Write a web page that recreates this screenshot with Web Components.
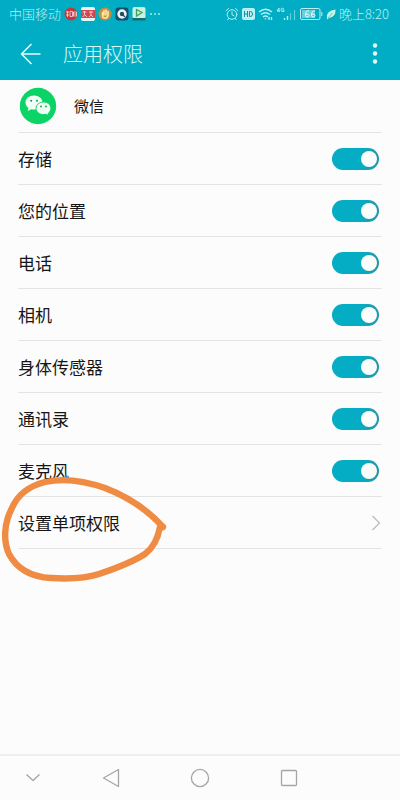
<!DOCTYPE html>
<html lang="zh-CN">
<head>
<meta charset="utf-8">
<meta name="viewport" content="width=device-width, initial-scale=1">
<title>应用权限</title>
<style>
  html { height: 100%; }
  body { margin: 0; min-height: 100%; display: flex; background: #fcfcfc; color: #161616; font-family: "Noto Sans CJK SC", "Noto Sans", sans-serif; --teal: #00adc4; --line: #e4e4e4; --pale: #b9f0f3; }
</style>
</head>
<body>
<permissions-app></permissions-app>
<script>
class BaseElement extends HTMLElement {
  constructor() {
    super();
    this.attachShadow({ mode: 'open' }).innerHTML = '<style>*{box-sizing:border-box}svg{display:block;flex:none}</style>' + this.render();
  }
  render() { return ''; }
}

customElements.define('status-bar', class extends BaseElement {
  render() {
    return `<style>
      :host { display: flex; align-items: center; justify-content: space-between; height: 28px; padding: 0 11px 0 9px; background: var(--teal); color: var(--pale); font-size: 13px; font-weight: 300; line-height: 28px; white-space: nowrap; }
      .group { display: flex; align-items: center; gap: 3px; }
    </style>
    <div class="group">
      <span>中国移动</span>
      <svg width="14" height="14" viewBox="0 0 14 14"><circle cx="7" cy="7" r="6.5" fill="#c3393f"/><path d="M2 5h3M3.5 4v6M2 8h3M6 4.500h2.500v5H6zM9.500 5h3v4h-3zM9.500 7h3" stroke="#f9dcdc" stroke-width=".8" fill="none"/></svg>
      <svg width="14" height="14" viewBox="0 0 14 14"><rect width="14" height="14" rx="2" fill="#e7f4f4"/><path d="M0 3h14v8H0z" fill="#d5474e"/><path d="M1.500 5h4M3.500 4v4L1.500 10M4 8l2 2M8 5h4M10 4v4L8 10M10 8l2 2" stroke="#fbdfe0" stroke-width=".8" fill="none"/></svg>
      <svg width="14" height="14" viewBox="0 0 14 14"><circle cx="7" cy="7" r="6.500" fill="#c2913f"/><path d="M4.500 5.500V9q0 2 2.500 2t3-2.500V4.500M6 8V3.500M8 8V3" stroke="#ffe8a6" stroke-width="1.600" fill="none" stroke-linecap="round"/></svg>
      <svg width="14" height="14" viewBox="0 0 14 14"><rect x=".5" y=".5" width="13" height="13" rx="3" fill="#15506a"/><circle cx="7" cy="7" r="4.700" fill="#e8f6fa"/><circle cx="7" cy="7" r="2.200" fill="#274a68"/><path d="M8 8l2 2" stroke="#274a68" stroke-width="1.300"/></svg>
      <svg width="14" height="14" viewBox="0 0 14 14"><rect x=".5" y="0" width="13" height="11.500" rx="2" fill="#c7f2df"/><path d="M4.500 2.500l5.500 3-5.500 3.500z" fill="#d9f3a0" stroke="#3f9f70" stroke-width="1.300"/><path d="M.5 11h13v2.500H.5z" fill="#176c74"/></svg>
      <svg width="14" height="14" viewBox="0 0 14 14" fill="#b9f0f3"><circle cx="2" cy="7" r=".9"/><circle cx="6" cy="7" r=".9"/><circle cx="10" cy="7" r=".9"/></svg>
    </div>
    <div class="group">
      <svg width="14" height="14" viewBox="0 0 14 14" fill="none" stroke="#b9f0f3" stroke-linecap="round"><circle cx="7" cy="7.500" r="4.800"/><path d="M7 4.800v3l2 1M1 3.800L3.500 1.500M13 3.800l-2.500-2.300M3.800 11.500l-1 1.300M10.200 11.500l1 1.300"/></svg>
      <svg width="13" height="12" viewBox="0 0 13 12"><rect width="13" height="12" rx="2" fill="#b9f0f3"/><path d="M2.500 3v6M5.500 3v6M2.500 6h3M7.500 3.500v5h1q2 0 2-2.500t-2-2.500z" stroke="#148fa5" fill="none"/></svg>
      <svg width="15" height="14" viewBox="0 0 15 14" fill="none" stroke="#b9f0f3" stroke-width="1.400"><path d="M1 5q6.500-5.500 13 0M3 7.500q4.500-3.500 9 0M5 10q2.500-2 5 0"/><circle cx="7.500" cy="11.800" r=".8" fill="#b9f0f3" stroke="none"/><path d="M11 10v3M13.500 10v3"/></svg>
      <svg width="21" height="14" viewBox="0 0 21 14" fill="none" stroke="#b9f0f3"><path d="M3 5V1L1 4h3M8 2Q5 0 5 3q0 2 3 1.500V3H6.500" stroke-width=".9"/><path d="M8.500 13v-2M11.500 13V9" stroke-width="1.400"/><path d="M14.500 13V6M18.500 13V3" stroke="#60cedb" stroke-width="1.200"/></svg>
      <svg width="23" height="12" viewBox="0 0 23 12" fill="none" stroke="#b9f0f3"><rect x=".5" y=".5" width="19.500" height="11" rx="1.500"/><path d="M2 2h13v8H2z" fill="#67cfdb" stroke="none"/><path d="M21.800 4v4"/><path d="M9 3Q5.500 2 5.500 7.500q0 1.500 1.700 1.500T9 7.500Q9 6 7.300 6T5.500 7M15 3q-3.500-1-3.500 4.500 0 1.500 1.700 1.500T15 7.500Q15 6 13.300 6T11.500 7" stroke="#e4ffff"/></svg>
      <svg width="10" height="12" viewBox="0 0 10 12"><path d="M1 9.500Q0 3 9.500 1.500 10 9 3 10L1 11.500z" fill="#c6f5e8"/><path d="M2 10l4.500-5" stroke="#31b9c4" stroke-width=".7"/></svg>
      <span>晚上8:20</span>
    </div>`;
  }
});

customElements.define('title-bar', class extends BaseElement {
  render() {
    return `<style>
      :host { display: flex; align-items: center; height: 52px; padding: 0 14px 0 19px; background: var(--teal); color: #d5fafa; }
      button { border: 0; padding: 0; background: none; color: #e2fdfd; }
      h1 { flex: 1; margin: 0 0 0 20px; font-size: 20px; font-weight: 300; line-height: 28px; }
    </style>
    <button aria-label="返回"><svg width="24" height="24" viewBox="0 0 24 24" fill="none" stroke="currentColor" stroke-width="1.500"><path d="M21.500 12H2.500M12.500 2L2.500 12l10 10"/></svg></button>
    <h1><slot></slot></h1>
    <button aria-label="更多"><svg width="22" height="24" viewBox="0 0 22 24" fill="currentColor"><circle cx="11" cy="3.500" r="2.200"/><circle cx="11" cy="11.500" r="2.200"/><circle cx="11" cy="19.500" r="2.200"/></svg></button>`;
  }
});

customElements.define('app-header', class extends BaseElement {
  render() {
    return `<style>
      :host { display: flex; align-items: center; gap: 17px; height: 53px; margin: 0 18px; padding-left: 1px; border-bottom: 1px solid var(--line); box-sizing: border-box; font-size: 15px; line-height: 24px; }
    </style>
    <svg width="38" height="38" viewBox="0 0 38 38"><circle cx="19" cy="19" r="18.200" fill="#0bd467"/>
      <path d="M15 8.500c-5 0-8.500 3.200-8.500 7 0 2.300 1.200 4.200 3 5.500l-.8 3 3.400-1.800c1 .3 2 .4 3 .4 4.800 0 8.400-3.200 8.400-7.100s-3.600-7-8.500-7z" fill="#f2fff7"/>
      <path d="M24.500 15c-4.300 0-7.500 2.900-7.500 6.300s3.200 6.300 7.500 6.300c1 0 1.900-.2 2.700-.4l2.800 1.500-.7-2.500c1.600-1.200 2.600-2.900 2.600-4.900 0-3.400-3.100-6.300-7.400-6.300z" fill="#f2fff7" stroke="#0bd467"/>
      <g fill="#0b9d50"><circle cx="12.200" cy="13.700" r="1"/><circle cx="18" cy="13.700" r="1"/><circle cx="22" cy="19.500" r=".9"/><circle cx="27" cy="19.500" r=".9"/></g></svg>
    <span><slot></slot></span>`;
  }
});

customElements.define('permission-row', class extends BaseElement {
  render() {
    return `<style>
      :host { display: block; margin: 0 18px; border-bottom: 1px solid var(--line); }
      label { display: flex; align-items: center; justify-content: space-between; height: 51px; padding-right: 3px; font-size: 17px; line-height: 24px; }
      input { appearance: none; flex: none; display: flex; align-items: center; width: 47px; height: 22px; margin: 0; padding: 0 2px; border-radius: 11px; background: #bbb; }
      input:checked { justify-content: flex-end; background: linear-gradient(90deg, #04adc4 60%, #2696a3); }
      input::before { content: ""; width: 16px; height: 16px; border-radius: 50%; background: #fcfefe; }
    </style>
    <label><span><slot></slot></span><input type="checkbox" role="switch" checked></label>`;
  }
});

customElements.define('link-row', class extends BaseElement {
  render() {
    return `<style>
      :host { display: block; position: relative; margin: 0 18px; border-bottom: 1px solid var(--line); }
      a { display: flex; align-items: center; justify-content: space-between; height: 51px; padding-right: 1px; color: inherit; text-decoration: none; font-size: 17px; line-height: 24px; }
      .mark { position: absolute; left: -18px; top: -27px; pointer-events: none; }
    </style>
    <a href="#single"><span><slot></slot></span><svg width="10" height="16" viewBox="0 0 10 16" fill="none" stroke="#bcbcbc" stroke-width="1.300"><path d="M1.500 1L8.500 8l-7 7"/></svg></a>
    <svg class="mark" width="180" height="120" viewBox="0 0 180 120" fill="none" stroke="#f08b43" stroke-width="6.400" stroke-linecap="round" stroke-linejoin="round" aria-hidden="true"><path d="M163 57C145 37 126 26 105 18C85 11 63 8 45 12C29 16 18 24 12 38C4 53 3 71 9 84C17 99 32 107 51 108C68 109 84 109 99 104C114 99 131 93 145 84C153 78 158 68 160 57"/></svg>`;
  }
});

customElements.define('navigation-bar', class extends BaseElement {
  render() {
    return `<style>
      :host { display: grid; grid-template-columns: 3fr 4fr 4fr 4fr 3fr; height: 46px; box-sizing: border-box; border-top: 2px solid #eee; background: #fcfcfc; }
      button { display: flex; align-items: center; justify-content: center; border: 0; padding: 0; background: none; color: #a5a5a5; }
      svg { fill: none; stroke: currentColor; stroke-width: 1.300; stroke-linejoin: round; }
    </style>
    <button aria-label="隐藏"><svg width="20" height="20" viewBox="0 0 20 20"><path d="M3.500 6.500l6.500 6 6.500-6"/></svg></button>
    <button aria-label="返回"><svg width="20" height="20" viewBox="0 0 20 20"><path d="M17.500 1.500v17L2.500 10z"/></svg></button>
    <button aria-label="主屏幕"><svg width="20" height="20" viewBox="0 0 20 20"><circle cx="10" cy="10" r="8.600"/></svg></button>
    <button aria-label="最近任务"><svg width="20" height="20" viewBox="0 0 20 20"><rect x="2.500" y="2.500" width="15" height="15" rx="1"/></svg></button>`;
  }
});

customElements.define('permissions-app', class extends BaseElement {
  render() {
    const rows = ['存储', '您的位置', '电话', '相机', '身体传感器', '通讯录', '麦克风'];
    return `<style>
      :host { flex: 1; min-width: 0; display: flex; flex-direction: column; }
      main { flex: 1; }
    </style>
    <status-bar></status-bar>
    <title-bar>应用权限</title-bar>
    <main>
      <app-header>微信</app-header>
      ${rows.map(name => `<permission-row>${name}</permission-row>`).join('')}
      <link-row>设置单项权限</link-row>
    </main>
    <navigation-bar></navigation-bar>`;
  }
});
</script>
</body>
</html>
